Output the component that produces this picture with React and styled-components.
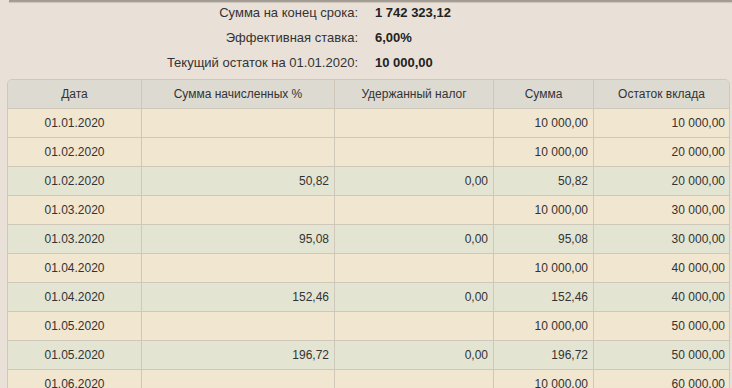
import React from "react";
import styled, { createGlobalStyle } from "styled-components";

const GlobalStyle = createGlobalStyle`
  html, body {
    margin: 0;
    padding: 0;
    background: #e9e1d7;
    font-family: "Liberation Sans", Arial, sans-serif;
    color: #333;
    overflow: hidden;
  }
  body {
    height: 388px;
  }
`;

const summary = [
  { label: "Сумма на конец срока:", value: "1 742 323,12" },
  { label: "Эффективная ставка:", value: "6,00%" },
  { label: "Текущий остаток на 01.01.2020:", value: "10 000,00" },
];

const rows = [
  { date: "01.01.2020", percent: "", tax: "", sum: "10 000,00", rest: "10 000,00" },
  { date: "01.02.2020", percent: "", tax: "", sum: "10 000,00", rest: "20 000,00" },
  { date: "01.02.2020", percent: "50,82", tax: "0,00", sum: "50,82", rest: "20 000,00" },
  { date: "01.03.2020", percent: "", tax: "", sum: "10 000,00", rest: "30 000,00" },
  { date: "01.03.2020", percent: "95,08", tax: "0,00", sum: "95,08", rest: "30 000,00" },
  { date: "01.04.2020", percent: "", tax: "", sum: "10 000,00", rest: "40 000,00" },
  { date: "01.04.2020", percent: "152,46", tax: "0,00", sum: "152,46", rest: "40 000,00" },
  { date: "01.05.2020", percent: "", tax: "", sum: "10 000,00", rest: "50 000,00" },
  { date: "01.05.2020", percent: "196,72", tax: "0,00", sum: "196,72", rest: "50 000,00" },
  { date: "01.06.2020", percent: "", tax: "", sum: "10 000,00", rest: "60 000,00" },
];

const App = () => {
  return (
    <>
      <GlobalStyle />
      <Page>
        <TopRule />
        <Summary>
          {summary.map((s, i) => (
            <React.Fragment key={i}>
              <SummaryLabel>{s.label}</SummaryLabel>
              <SummaryValue>{s.value}</SummaryValue>
            </React.Fragment>
          ))}
        </Summary>
        <Table>
          <colgroup>
            <col style={{ width: 134 }} />
            <col style={{ width: 193 }} />
            <col style={{ width: 159 }} />
            <col style={{ width: 100 }} />
            <col style={{ width: 135 }} />
          </colgroup>
          <thead>
            <tr>
              <Th>Дата</Th>
              <Th>Сумма начисленных %</Th>
              <Th>Удержанный налог</Th>
              <Th>Сумма</Th>
              <Th>Остаток вклада</Th>
            </tr>
          </thead>
          <tbody>
            {rows.map((r, i) => (
              <Row key={i} $interest={r.percent !== ""}>
                <Td $center>{r.date}</Td>
                <Td>{r.percent}</Td>
                <Td>{r.tax}</Td>
                <Td>{r.sum}</Td>
                <Td>{r.rest}</Td>
              </Row>
            ))}
          </tbody>
        </Table>
      </Page>
    </>
  );
};

const Page = styled.div`
  height: 388px;
  overflow: hidden;
`;

const TopRule = styled.div`
  margin-left: 9px;
  height: 2px;
  background: #a39c94;
  box-shadow: 0 1px 1px rgba(120, 110, 100, 0.25);
`;

const Summary = styled.div`
  display: grid;
  grid-template-columns: 358px auto;
  grid-auto-rows: 25px;
  column-gap: 17px;
  align-items: center;
  font-size: 13px;
  margin-top: -2px;
  margin-bottom: 4px;
`;

const SummaryLabel = styled.div`
  text-align: right;
  color: #333;
`;

const SummaryValue = styled.div`
  font-weight: 700;
  color: #222;
`;

const Table = styled.table`
  margin-left: 7px;
  width: 721px;
  table-layout: fixed;
  border-collapse: separate;
  border-spacing: 0;
  border: 1px solid #cfc7ba;
  border-radius: 5px;
  overflow: hidden;
  font-size: 12px;
  color: #333;
`;

const Th = styled.th`
  height: 28px;
  padding: 0 5px;
  font-weight: 400;
  text-align: center;
  background: #dddad2;
  border-right: 1px solid #cfc7ba;
  &:last-child {
    border-right: none;
  }
`;

const Row = styled.tr`
  background: ${(p) => (p.$interest ? "#e3e5d2" : "#f1e6d0")};
`;

const Td = styled.td`
  height: 28px;
  padding: 0 5px;
  text-align: ${(p) => (p.$center ? "center" : "right")};
  border-top: 1px solid #cfc7ba;
  border-right: 1px solid #cfc7ba;
  white-space: nowrap;
  &:last-child {
    border-right: none;
    padding-right: 4px;
  }
`;

export default App;
